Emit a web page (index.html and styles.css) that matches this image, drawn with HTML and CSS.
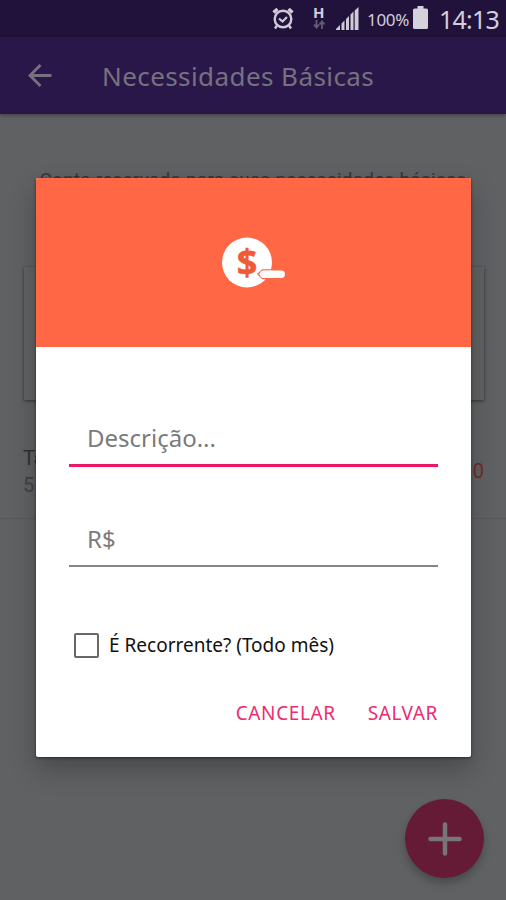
FILE: index.html
```html
<!DOCTYPE html>
<html lang="pt-BR">
<head>
  <meta charset="utf-8">
  <title>Necessidades Básicas</title>
  <link rel="stylesheet" href="styles.css">
</head>

<body>
  <div class="screen">
    <div class="status-bar">
      <svg class="alarm" width="22" height="24" viewBox="0 0 22 24" fill="none" stroke="#cfcad6" stroke-width="2.400">
        <circle cx="11" cy="12" r="8.300"/>
        <path d="M7 11.500l3.500 3 4.500-4.500" stroke-width="2.200"/>
        <path d="M1.500 5.500l4-3.500M20.500 5.500l-4-3.500" stroke-width="3.600"/>
        <path d="M5 18.500l-2 3M17 18.500l2 3"/>
      </svg>
      <div class="network">
        <span>H</span>
        <svg width="12" height="9" viewBox="0 0 12 9" fill="none" stroke="#655b76" stroke-width="1.800">
          <path d="M3.500 0v7M1 4.500l2.500 3 2.500-3M9 9V2M6.500 4.500l2.500-3 2.500 3"/>
        </svg>
      </div>
      <svg class="signal" width="23" height="23" viewBox="0 0 23 23" fill="#cfcad6">
        <path d="M0 23v-1l4-4v5zM5.500 23v-6.500l3-3V23zM10 23V12l3-3v14zM14.500 23V7.500l3-3V23zM18.700 23V3.500L22.500 0v23z"/>
      </svg>
      <span class="percent">100%</span>
      <svg class="battery" width="15" height="23" viewBox="0 0 15 23" fill="#d5d1dc">
        <path d="M4.500 0h6v2.500h3q1.500 0 1.500 1.500v17.500q0 1.500-1.500 1.500h-12Q0 23 0 21.500V4q0-1.500 1.500-1.500h3z"/>
      </svg>
      <span class="clock">14:13</span>
    </div>

    <div class="app-bar">
      <svg width="24" height="24" viewBox="0 0 24 24" fill="none" stroke="#77717f" stroke-width="2.800">
        <path d="M23.500 11.500H3M12.500 1L2 11.500 12.500 22"/>
      </svg>
      <h1>Necessidades Básicas</h1>
    </div>

    <div class="content">
      <p class="intro">Conta reservada para suas necessidades básicas</p>
      <div class="card"></div>
      <div class="entry">
        <div>
          <div class="entry-name">Ta</div>
          <div class="entry-date">5</div>
        </div>
        <div class="entry-value">0</div>
      </div>
    </div>

    <button type="button" class="fab">
      <svg width="34" height="34" viewBox="0 0 34 34" fill="none" stroke="#77757a" stroke-width="4.500" stroke-linecap="round">
        <path d="M17 2.500v29M2.500 17h29"/>
      </svg>
    </button>

    <form class="dialog">
      <div class="dialog-header">
        <svg width="64" height="52" viewBox="0 0 64 52">
          <circle cx="25" cy="25.500" r="25" fill="#fff"/>
          <text class="coin-sign" x="25" y="38" text-anchor="middle">$</text>
          <path d="M51 33H40.500L36 37l4.500 4.500H51" fill="#fff" stroke="#ff6745" stroke-width="1.600" stroke-linejoin="round"/>
          <rect x="38" y="33.500" width="25" height="7.500" rx="3.700" fill="#fff"/>
        </svg>
      </div>
      <div class="dialog-body">
        <input type="text" class="field active" placeholder="Descrição...">
        <input type="text" class="field" placeholder="R$">
        <label class="recurring">
          <input type="checkbox">
          <span>É Recorrente? (Todo mês)</span>
        </label>
        <div class="actions">
          <button type="button" class="cancel">CANCELAR</button>
          <button type="button" class="save">SALVAR</button>
        </div>
      </div>
    </form>
  </div>
</body>
</html>
```
FILE: styles.css
```css
* {
  box-sizing: border-box;
}

body {
  margin: 0;
  font-family: "Noto Sans", sans-serif;
}

.screen {
  position: relative;
  height: 900px;
  overflow: hidden;
  background-color: #5f6163;
}

.status-bar {
  display: flex;
  align-items: flex-start;
  height: 37px;
  padding-left: 272px;
  background-color: #21123b;
  color: #d2ceda;
}

.alarm {
  margin-top: 7px;
}

.network {
  display: flex;
  flex-direction: column;
  width: 12px;
  margin: 5px 0 0 19px;
  font-size: 15px;
  font-weight: bold;
  line-height: 15px;
}

.signal {
  margin: 7px 0 0 11px;
}

.percent {
  width: 44px;
  margin: 8px 0 0 8px;
  font-size: 17px;
  line-height: 23px;
  letter-spacing: -0.3px;
}

.battery {
  margin: 6px 0 0 2px;
}

.clock {
  margin: 4px 0 0 11px;
  font-size: 25px;
  line-height: 31px;
  letter-spacing: -0.8px;
}

.app-bar {
  display: flex;
  align-items: center;
  height: 77px;
  padding: 0 0 0 28px;
  background-color: #2a174a;
  box-shadow: 0 1px 4px rgba(0, 0, 0, 0.4);
}

.app-bar h1 {
  margin: 0 0 0 50px;
  color: #77717f;
  font-size: 26px;
  font-weight: normal;
  line-height: 36px;
  letter-spacing: 0.42px;
}

.content {
  padding-top: 54px;
}

.intro {
  margin: 0;
  color: #35373a;
  font-family: Roboto, sans-serif;
  font-size: 19px;
  line-height: 24px;
  letter-spacing: 0.22px;
  text-align: center;
  white-space: nowrap;
}

.card {
  height: 133px;
  margin: 75px 22px 0 24px;
  background-color: #616262;
  box-shadow: 0 1px 3px rgba(0, 0, 0, 0.5);
}

.entry {
  display: flex;
  align-items: center;
  justify-content: space-between;
  height: 119px;
  padding: 25px 22px 0 23px;
  border-bottom: 1px solid #58595b;
  color: #404245;
  font-family: Roboto, sans-serif;
  font-size: 20px;
  line-height: 27px;
}

.entry-name {
  color: #303234;
}

.entry-value {
  color: #782827;
}

.fab {
  position: absolute;
  right: 22px;
  bottom: 22px;
  display: flex;
  align-items: center;
  justify-content: center;
  width: 79px;
  height: 79px;
  padding: 0;
  border: none;
  border-radius: 50%;
  background-color: #651a36;
  box-shadow: 0 5px 9px rgba(0, 0, 0, 0.25);
}

.dialog {
  position: absolute;
  top: 178px;
  left: 36px;
  width: 435px;
  height: 579px;
  overflow: hidden;
  border-radius: 2px;
  background-color: #fff;
  box-shadow: 0 1px 3px rgba(0, 0, 0, 0.5), 0 12px 26px rgba(0, 0, 0, 0.25);
}

.dialog-header {
  height: 169px;
  padding: 59px 0 0 186px;
  background-color: #ff6745;
}

.coin-sign {
  fill: #f05a35;
  stroke: #f05a35;
  stroke-width: 0.5px;
  font-family: "Open Sans", sans-serif;
  font-size: 36px;
  font-weight: bold;
}

.dialog-body {
  display: flex;
  flex-direction: column;
  padding: 64px 33px 0;
}

.field {
  height: 56px;
  margin-bottom: 44px;
  padding: 0 18px;
  border: none;
  border-bottom: 2px solid #858585;
  outline: none;
  background: none;
  font-family: "Noto Sans", sans-serif;
  font-size: 24px;
}

.field.active {
  border-bottom: 3px solid #ec1768;
}

.field::placeholder {
  color: #7b7b7b;
  opacity: 1;
}

.recurring {
  display: flex;
  align-items: center;
  height: 28px;
  margin-top: 20px;
  padding-left: 5px;
  color: #111;
  font-size: 19px;
  white-space: nowrap;
}

.recurring input {
  width: 25px;
  height: 25px;
  margin: 0 10px 0 0;
  border: 2px solid #686868;
  border-radius: 2px;
  appearance: none;
}

.actions {
  display: flex;
  justify-content: flex-end;
  margin-top: 39px;
}

.actions button {
  padding: 0;
  border: none;
  background: none;
  color: #ec2b73;
  font-family: "Noto Sans", sans-serif;
  font-size: 19px;
  line-height: 30px;
  letter-spacing: 0.6px;
}

.actions .save {
  margin-left: 32px;
}
```
